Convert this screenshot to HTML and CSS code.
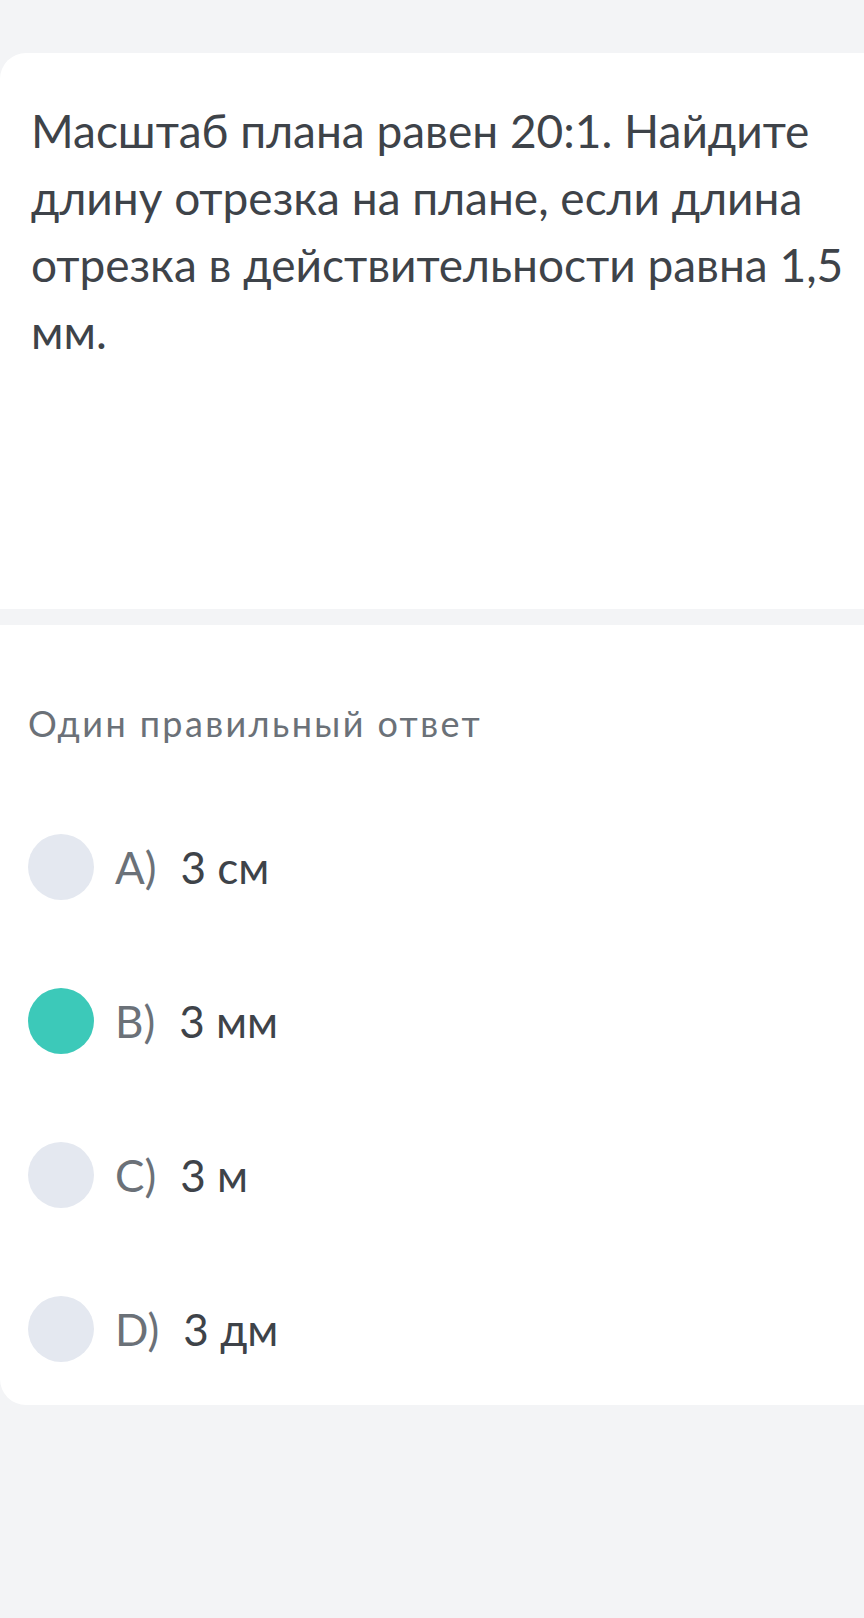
FILE: index.html
```html
<!DOCTYPE html>
<html lang="ru">
<head>
  <meta charset="UTF-8">
  <title>Вопрос</title>
  <link rel="stylesheet" href="styles.css">
</head>
<body>
  <div class="card">
    <div class="question">
      <p>Масштаб плана равен 20:1. Найдите длину отрезка на плане, если длина отрезка в действительности равна 1,5 мм.</p>
    </div>

    <div class="divider"></div>

    <div class="answers">
      <div class="hint">Один правильный ответ</div>

      <div class="options">
        <div class="option">
          <span class="radio"></span>
          <span class="letter">A)</span>
          <span class="text">3 см</span>
        </div>
        <div class="option">
          <span class="radio checked"></span>
          <span class="letter">B)</span>
          <span class="text">3 мм</span>
        </div>
        <div class="option">
          <span class="radio"></span>
          <span class="letter">C)</span>
          <span class="text">3 м</span>
        </div>
        <div class="option">
          <span class="radio"></span>
          <span class="letter">D)</span>
          <span class="text">3 дм</span>
        </div>
      </div>
    </div>
  </div>
</body>
</html>
```

FILE: styles.css
```css
body {
  margin: 0;
  background: #f3f4f6;
  font-family: Lato, Roboto, sans-serif;
  color: #3e4349;
}
.card {
  margin-top: 53px;
  background: white;
  border-radius: 26px 0 0 26px;
  overflow: hidden;
}
.question {
  height: 556px;
  padding: 44px 2px 0 31px;
  box-sizing: border-box;
}
.question p {
  margin: 0;
  font-size: 46px;
  line-height: 67px;
}
.divider {
  height: 16px;
  background: #f3f4f6;
}
.answers {
  padding: 78px 0 43px 28px;
}
.hint {
  font-size: 36px;
  line-height: 40px;
  letter-spacing: 2.4px;
  color: #6b7178;
}
.options {
  margin-top: 91px;
  display: flex;
  flex-direction: column;
  gap: 88px;
}
.option {
  display: flex;
  align-items: center;
  height: 66px;
  font-size: 44px;
}
.radio {
  width: 66px;
  height: 66px;
  border-radius: 50%;
  background: #e4e8f0;
  margin-right: 21px;
}
.radio.checked {
  background: #3cc9b9;
}
.letter {
  color: #6b7178;
  margin-right: 24px;
}
```
